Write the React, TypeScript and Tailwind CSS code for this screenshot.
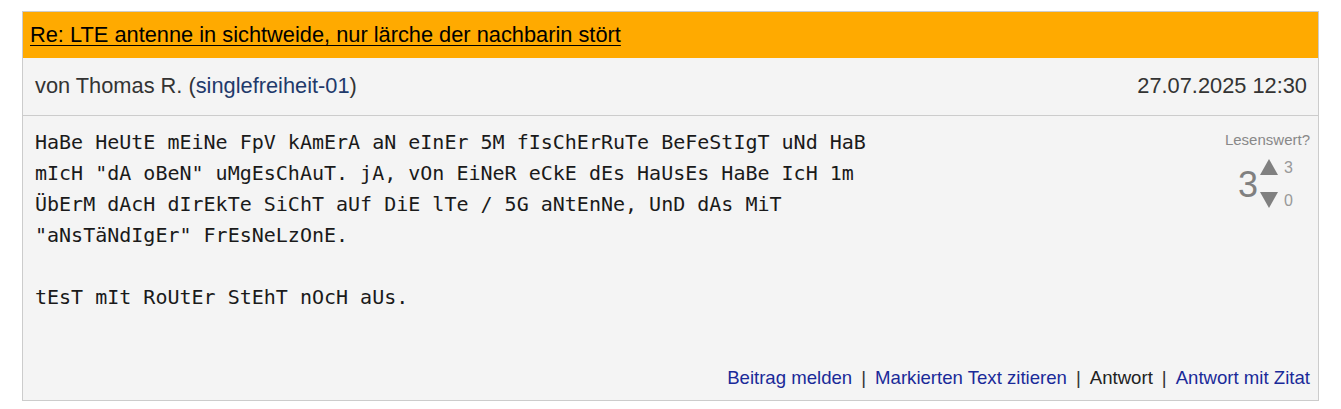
import React from 'react';

const bodyText = `HaBe HeUtE mEiNe FpV kAmErA aN eInEr 5M fIsChErRuTe BeFeStIgT uNd HaB mIcH "dA oBeN" uMgEsChAuT. jA, vOn EiNeR eCkE dEs HaUsEs HaBe IcH 1m ÜbErM dAcH dIrEkTe SiChT aUf DiE lTe / 5G aNtEnNe, UnD dAs MiT "aNsTäNdIgEr" FrEsNeLzOnE.

tEsT mIt RoUtEr StEhT nOcH aUs.`;

function Triangle({ up }: { up?: boolean }) {
  return (
    <svg width="18" height="16" viewBox="0 0 18 16" className="block">
      {up ? <polygon points="9,0 18,16 0,16" fill="#808080" /> : <polygon points="0,0 18,0 9,16" fill="#808080" />}
    </svg>
  );
}

export default function App() {
  return (
    <div className="bg-white min-h-[409px] pt-[11px] pl-[22px] pr-[22px]" style={{ fontFamily: '"Liberation Sans", Arial, sans-serif' }}>
      <div className="w-[1297px] border border-[#cccccc] bg-[#f4f4f4]">
        {/* Header */}
        <div className="bg-[#ffaa00] h-[46px] flex items-center pl-[7px]">
          <a href="#" className="text-[21.8px] text-black underline underline-offset-[3px] decoration-1">
            Re: LTE antenne in sichtweide, nur lärche der nachbarin stört
          </a>
        </div>

        {/* Meta */}
        <div className="h-[58px] flex items-center justify-between pl-[12px] pr-[11px] border-b border-[#cccccc] text-[21.8px] text-[#333333]">
          <div>
            von Thomas R. (<a href="#" className="text-[#1f3a6b]">singlefreiheit-01</a>)
          </div>
          <div>27.07.2025 12:30</div>
        </div>

        {/* Body */}
        <div className="flex justify-between pl-[12px] pr-[8px] pt-[11px] h-[240px]">
          <div
            className="w-[860px] whitespace-pre-wrap text-[20px] leading-[31px] text-[#1a1a1a]"
            style={{ fontFamily: '"DejaVu Sans Mono", monospace' }}
          >
            {bodyText}
          </div>
          <div className="flex flex-col items-end pt-[2px]">
            <div className="text-[15px] text-[#888888]">Lesenswert?</div>
            <div className="flex items-center mt-[7px] mr-[17px]">
              <div className="text-[36px] text-[#808080] leading-none mr-[2px] mt-[4px]">3</div>
              <div className="flex flex-col gap-[17px]">
                <div className="flex items-end gap-[6px]">
                  <Triangle up />
                  <span className="text-[16px] text-[#999999] leading-none -mb-[1px]">3</span>
                </div>
                <div className="flex items-end gap-[6px]">
                  <Triangle />
                  <span className="text-[16px] text-[#999999] leading-none -mb-[1px]">0</span>
                </div>
              </div>
            </div>
          </div>
        </div>

        {/* Footer */}
        <div className="flex justify-end items-center h-[44px] pr-[8px] text-[18.6px]">
          <a href="#" className="text-[#1a2a99]">Beitrag melden</a>
          <span className="mx-[9px] text-[#333333]">|</span>
          <a href="#" className="text-[#1a2a99]">Markierten Text zitieren</a>
          <span className="mx-[9px] text-[#333333]">|</span>
          <a href="#" className="text-[#222222]">Antwort</a>
          <span className="mx-[9px] text-[#333333]">|</span>
          <a href="#" className="text-[#1a2a99]">Antwort mit Zitat</a>
        </div>
      </div>
    </div>
  );
}
